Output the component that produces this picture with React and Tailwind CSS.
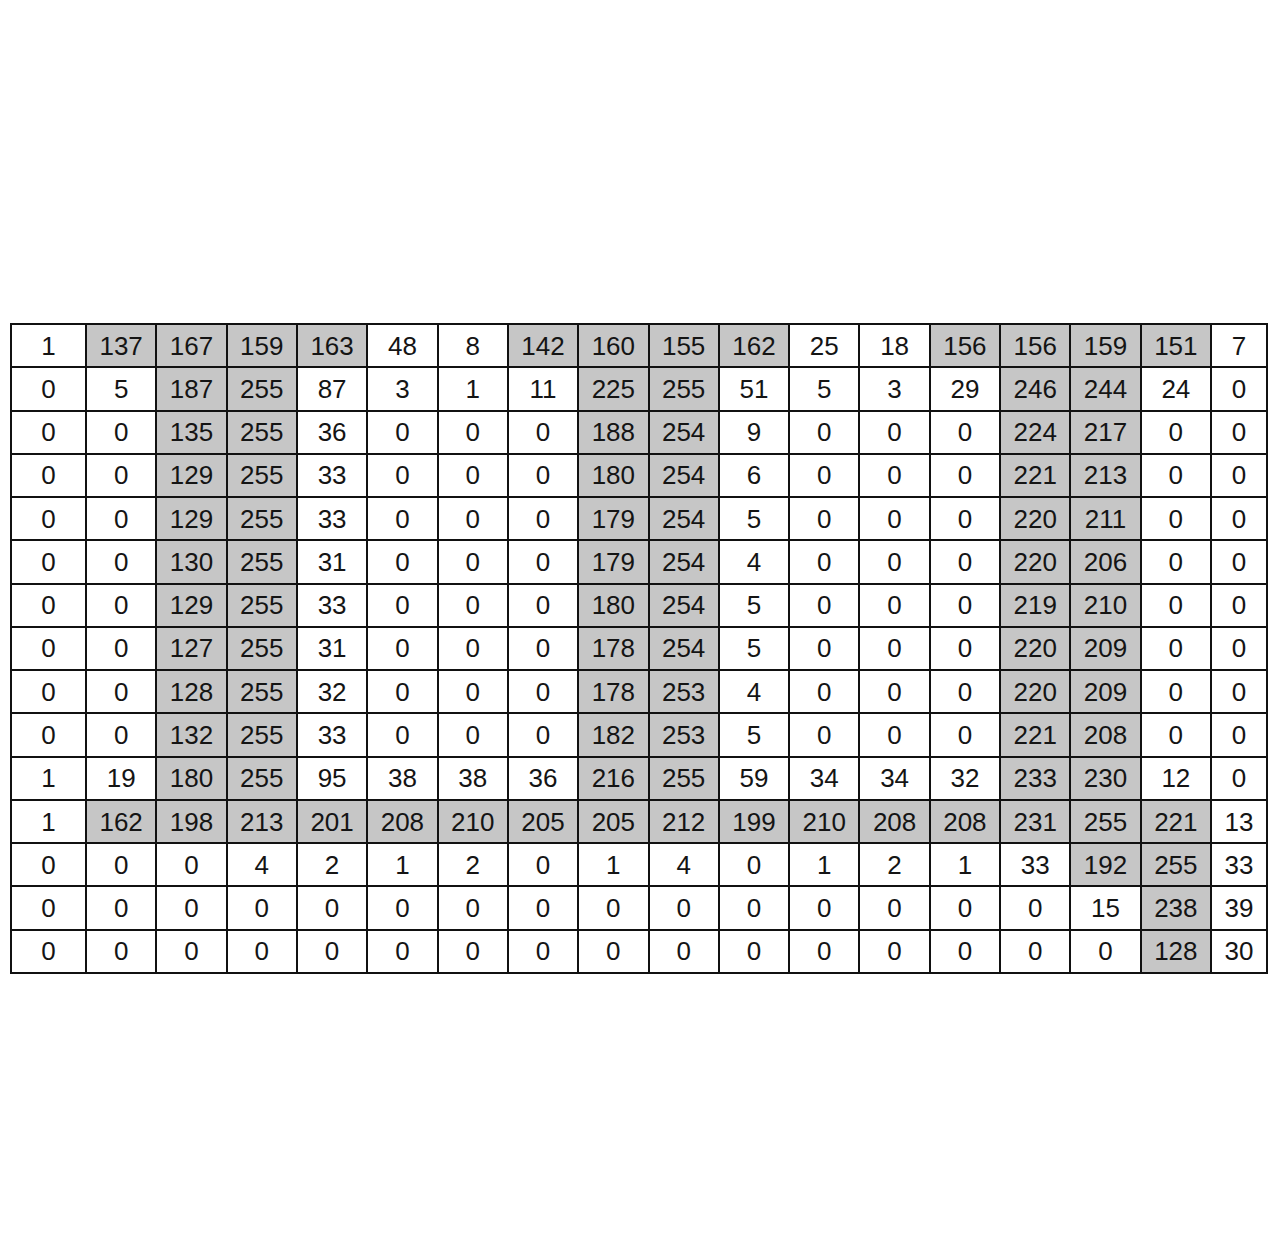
import React from "react";

const rows = [
  [1, 137, 167, 159, 163, 48, 8, 142, 160, 155, 162, 25, 18, 156, 156, 159, 151, 7],
  [0, 5, 187, 255, 87, 3, 1, 11, 225, 255, 51, 5, 3, 29, 246, 244, 24, 0],
  [0, 0, 135, 255, 36, 0, 0, 0, 188, 254, 9, 0, 0, 0, 224, 217, 0, 0],
  [0, 0, 129, 255, 33, 0, 0, 0, 180, 254, 6, 0, 0, 0, 221, 213, 0, 0],
  [0, 0, 129, 255, 33, 0, 0, 0, 179, 254, 5, 0, 0, 0, 220, 211, 0, 0],
  [0, 0, 130, 255, 31, 0, 0, 0, 179, 254, 4, 0, 0, 0, 220, 206, 0, 0],
  [0, 0, 129, 255, 33, 0, 0, 0, 180, 254, 5, 0, 0, 0, 219, 210, 0, 0],
  [0, 0, 127, 255, 31, 0, 0, 0, 178, 254, 5, 0, 0, 0, 220, 209, 0, 0],
  [0, 0, 128, 255, 32, 0, 0, 0, 178, 253, 4, 0, 0, 0, 220, 209, 0, 0],
  [0, 0, 132, 255, 33, 0, 0, 0, 182, 253, 5, 0, 0, 0, 221, 208, 0, 0],
  [1, 19, 180, 255, 95, 38, 38, 36, 216, 255, 59, 34, 34, 32, 233, 230, 12, 0],
  [1, 162, 198, 213, 201, 208, 210, 205, 205, 212, 199, 210, 208, 208, 231, 255, 221, 13],
  [0, 0, 0, 4, 2, 1, 2, 0, 1, 4, 0, 1, 2, 1, 33, 192, 255, 33],
  [0, 0, 0, 0, 0, 0, 0, 0, 0, 0, 0, 0, 0, 0, 0, 15, 238, 39],
  [0, 0, 0, 0, 0, 0, 0, 0, 0, 0, 0, 0, 0, 0, 0, 0, 128, 30],
];

export default function App() {
  return (
    <div className="w-[1280px] h-[1255px] bg-white pt-[323px] pl-[10px]" style={{ fontFamily: '"Liberation Sans", Arial, sans-serif' }}>
      <div className="grid w-[1258px] h-[651px] bg-[#111] p-[2px] gap-[2px] grid-cols-[73px_repeat(16,minmax(0,1fr))_54px] grid-rows-[repeat(15,minmax(0,1fr))]">
        {rows.map((r, i) =>
          r.map((v, j) => (
            <div
              key={i + "-" + j}
              className={
                "flex items-center justify-center text-[26px] leading-none text-[#141414] " +
                (v > 100 ? "bg-[#c6c6c6]" : "bg-white")
              }
            >
              {v}
            </div>
          ))
        )}
      </div>
    </div>
  );
}
